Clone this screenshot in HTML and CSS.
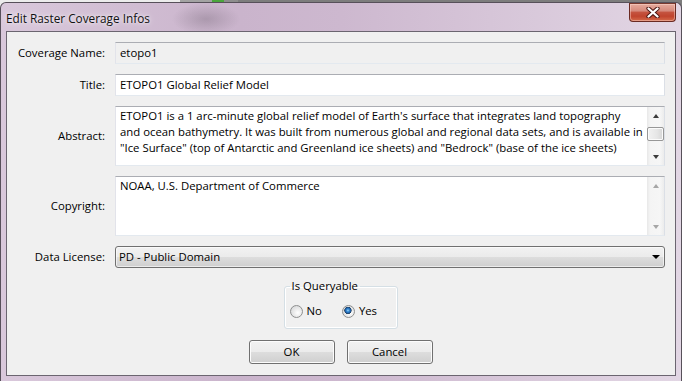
FILE: index.html
```html
<!DOCTYPE html>
<html lang="en">
<head>
<meta charset="utf-8">
<title>Edit Raster Coverage Infos</title>
<link rel="stylesheet" href="styles.css">
</head>
<body>
<div class="window">
  <div class="titlebar">
    <span class="title">Edit Raster Coverage Infos</span>
    <button class="close" aria-label="Close">
      <svg width="14" height="11" viewBox="0 0 14 11" aria-hidden="true">
        <path d="M2.5 1.5 L11.5 9.5 M11.5 1.5 L2.5 9.5" stroke="#4a1410" stroke-width="4.2" stroke-linecap="round" fill="none"/>
        <path d="M2.5 1.5 L11.5 9.5 M11.5 1.5 L2.5 9.5" stroke="#ffffff" stroke-width="2.3" stroke-linecap="round" fill="none"/>
      </svg>
    </button>
  </div>
  <div class="client">
    <div class="form">
      <span class="lbl">Coverage Name:</span>
      <div class="field disabled">etopo1</div>

      <span class="lbl">Title:</span>
      <div class="field">ETOPO1 Global Relief Model</div>

      <span class="lbl">Abstract:</span>
      <div class="area">
        <div class="area-text">ETOPO1 is a 1 arc-minute global relief model of Earth's surface that integrates land topography<br>and ocean bathymetry. It was built from numerous global and regional data sets, and is available in<br>"Ice Surface" (top of Antarctic and Greenland ice sheets) and "Bedrock" (base of the ice sheets)</div>
        <div class="vscroll">
          <span class="sbtn"><span class="tri up"></span></span>
          <span class="track"><span class="thumb"></span></span>
          <span class="sbtn"><span class="tri down"></span></span>
        </div>
      </div>

      <span class="lbl">Copyright:</span>
      <div class="area">
        <div class="area-text">NOAA, U.S. Department of Commerce</div>
        <div class="vscroll off">
          <span class="sbtn"><span class="tri up"></span></span>
          <span class="track"></span>
          <span class="sbtn"><span class="tri down"></span></span>
        </div>
      </div>

      <span class="lbl">Data License:</span>
      <div class="select">
        <span class="select-text">PD - Public Domain</span>
        <span class="tri down dark"></span>
      </div>
    </div>

    <div class="bottom">
      <fieldset class="group">
        <legend>Is Queryable</legend>
        <div class="radios">
          <label class="radio-item"><span class="radio"></span>No</label>
          <label class="radio-item"><span class="radio checked"></span>Yes</label>
        </div>
      </fieldset>
      <div class="buttons">
        <button class="btn">OK</button>
        <button class="btn">Cancel</button>
      </div>
    </div>
  </div>
</div>
</body>
</html>
```
FILE: styles.css
```css
* { box-sizing: border-box; }
html, body { margin: 0; padding: 0; }
body {
  width: 682px;
  height: 381px;
  overflow: hidden;
  font-family: "Open Sans", "Noto Sans", sans-serif;
  font-size: 11.35px;
  line-height: 16px;
  color: #000;
  background: linear-gradient(to right, #ececec 0 180px, #a3a3a3 180px 212px, #4aa63c 212px 224px, #8d8d8d 224px 238px, #7d7d7d 238px 100%);
}

.window {
  margin-top: 2px;
  height: 379px;
  border: 1px solid #57505a;
  border-bottom: none;
  border-radius: 6px 6px 0 0;
  padding: 0 5px 5px;
  display: flex;
  flex-direction: column;
  background:
    radial-gradient(ellipse 34px 16px at 205px 16px, rgba(110, 96, 112, 0.35), rgba(110, 96, 112, 0) 100%),
    linear-gradient(to right, #d9c8db 0%, #d0bcd2 20%, #cab4cc 35%, #cdb8cf 50%, #d6c5d8 72%, #e2d6e4 100%);
}

.titlebar {
  height: 28px;
  display: flex;
  align-items: flex-start;
}
.title {
  align-self: center;
  padding-top: 1px;
  font-size: 11.8px;
  color: #111;
  text-shadow: 0 0 6px rgba(255, 255, 255, 0.9), 0 0 3px rgba(255, 255, 255, 0.7);
}
.close {
  margin-left: auto;
  width: 47px;
  height: 19px;
  padding: 0;
  border: 1px solid #6a2a22;
  border-top-color: #7a3a30;
  border-radius: 0 0 4px 4px;
  background: linear-gradient(#e6ab9e 0%, #d68a7c 40%, #c4533f 50%, #c0442e 72%, #d46a4a 100%);
  box-shadow: inset 0 0 0 1px rgba(255, 220, 210, 0.45);
  display: flex;
  align-items: center;
  justify-content: center;
}
.close svg { display: block; }

.client {
  flex: 1;
  border: 1px solid #6b6570;
  background: #f0f0f0;
  padding: 10px 10px 0 8px;
}

.form {
  display: grid;
  grid-template-columns: 90px 1fr;
  column-gap: 10px;
  row-gap: 10px;
  align-items: center;
}
.lbl {
  text-align: right;
  white-space: nowrap;
}

.field {
  height: 22px;
  padding: 2px 4px;
  border: 1px solid;
  border-color: #abadb3 #dbdfe6 #e3e9ef #e2e3ea;
  background: #fff;
  white-space: nowrap;
}
.field.disabled { background: #f0f0f0; }

.area {
  height: 60px;
  border: 1px solid;
  border-color: #abadb3 #dbdfe6 #e3e9ef #e2e3ea;
  background: #fff;
  display: flex;
}
.area-text {
  flex: 1;
  padding: 1px 0 0 4px;
  white-space: nowrap;
  overflow: hidden;
}
.vscroll {
  width: 17px;
  display: flex;
  flex-direction: column;
  background: linear-gradient(to right, #e8e8e8 0, #f4f4f4 3px, #f6f6f6 13px, #ececec 100%);
}
.sbtn {
  height: 17px;
  display: flex;
  align-items: center;
  justify-content: center;
}
.track {
  flex: 1;
  padding: 3px 0 0 0;
}
.thumb {
  display: block;
  height: 14px;
  border: 1px solid #979797;
  border-radius: 2px;
  background: linear-gradient(to right, #f2f2f2, #e6e6e6 60%, #d6d6d6);
  box-shadow: inset 0 0 0 1px #fbfbfb;
}
.tri {
  width: 0;
  height: 0;
  border-left: 3.5px solid transparent;
  border-right: 3.5px solid transparent;
}
.tri.up { border-bottom: 4px solid #3c3c3c; }
.tri.down { border-top: 4px solid #3c3c3c; }
.vscroll.off .tri.up { border-bottom-color: #a6a6a6; }
.vscroll.off .tri.down { border-top-color: #a6a6a6; }
.tri.dark.down { border-top-color: #000; border-left-width: 4px; border-right-width: 4px; }

.select {
  height: 22px;
  border: 1px solid #707070;
  border-radius: 3px;
  background: linear-gradient(#f2f2f2 0%, #ebebeb 50%, #dddddd 51%, #cfcfcf 100%);
  box-shadow: inset 0 0 0 1px rgba(255, 255, 255, 0.6);
  display: flex;
  align-items: center;
  padding: 0 4px 0 3px;
}
.select-text { flex: 1; }

.bottom {
  display: flex;
  flex-direction: column;
  align-items: center;
  padding-left: 1px;
}
.group {
  margin: 10px 0 0;
  width: 114px;
  padding: 9px 5px 9px;
  border: 1px solid #d5dfe5;
  border-radius: 3px;
  box-shadow: inset 0 0 0 1px #ffffff;
}
.group legend {
  padding: 0 2px;
}
.radios {
  display: flex;
  align-items: center;
  gap: 20px;
}
.radio-item {
  display: flex;
  align-items: center;
  gap: 4px;
}
.radio {
  width: 13px;
  height: 13px;
  border-radius: 50%;
  border: 1px solid #8e8f8f;
  background: radial-gradient(circle at 62% 62%, #ffffff 0, #eeeeee 35%, #cfd1d3 100%);
}
.radio.checked {
  background:
    radial-gradient(circle at 45% 40%, #a6dcff 0, #3f93d8 1.2px, #1c5fa8 2.6px, #24405e 3.4px, rgba(36, 64, 94, 0) 3.9px),
    radial-gradient(circle at 62% 62%, #ffffff 0, #eeeeee 35%, #cfd1d3 100%);
}

.buttons {
  margin-top: 11px;
  display: flex;
  gap: 12px;
}
.btn {
  width: 86px;
  height: 24px;
  padding: 0;
  font: inherit;
  color: #000;
  border: 1px solid #707070;
  border-radius: 3px;
  background: linear-gradient(#f2f2f2 0%, #ebebeb 50%, #dddddd 51%, #cfcfcf 100%);
  box-shadow: inset 0 0 0 1px #fcfcfc;
}
```
